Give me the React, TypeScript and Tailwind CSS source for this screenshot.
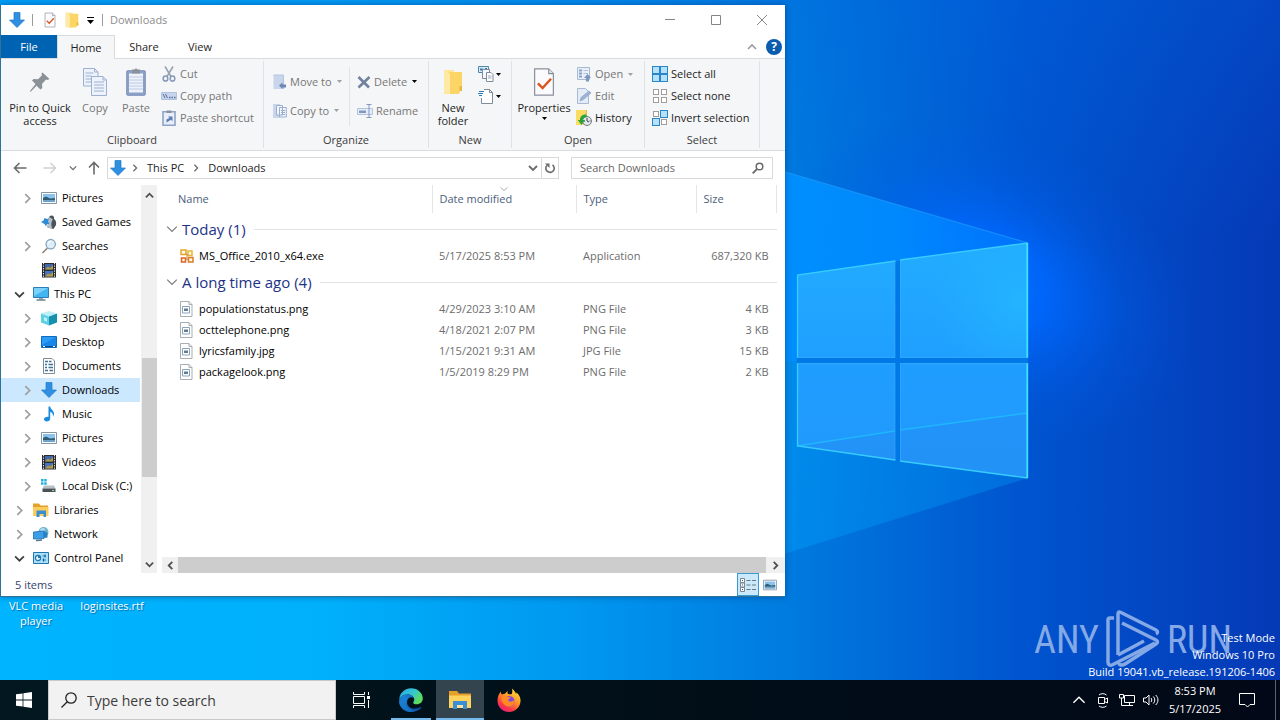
import type { ReactNode } from "react";

type IconProps = { className?: string };

/* ---------- small shared drawings ---------- */

function DownArrow({ className = "size-4" }: IconProps) {
  return (
    <svg viewBox="0 0 16 16" className={className} aria-hidden="true">
      <path d="M5 .5h6V8h4.500L8 15.500.5 8H5z" fill="#2f8fe0" />
      <path d="M5 .5h6V8h4.500L8 15.500.5 8H5z" fill="none" stroke="#1f78c8" strokeWidth=".7" />
    </svg>
  );
}

function Chevron({ dir, className = "size-2.5", w = 1.600 }: IconProps & { dir: "up" | "down" | "left" | "right"; w?: number }) {
  const d = {
    up: "M1 7l4-4 4 4",
    down: "M1 3l4 4 4-4",
    left: "M7 1L3 5l4 4",
    right: "M3 1l4 4-4 4",
  }[dir];
  return (
    <svg viewBox="0 0 10 10" className={className} aria-hidden="true">
      <path d={d} fill="none" stroke="currentColor" strokeWidth={w} />
    </svg>
  );
}

function Caret({ className = "text-black" }: IconProps) {
  return (
    <svg viewBox="0 0 5 3" className={"h-[3px] w-[5px] shrink-0 " + className} aria-hidden="true">
      <path d="M0 0h5L2.500 3z" fill="currentColor" />
    </svg>
  );
}

function CheckDoc({ className = "size-4" }: IconProps) {
  return (
    <svg viewBox="0 0 24 32" className={className} aria-hidden="true">
      <path d="M2 2h15l5 5v23H2z" fill="#fbfbfd" stroke="#8a8f9c" strokeWidth="1.300" />
      <path d="M17 2v5h5" fill="#dde3ee" stroke="#8a8f9c" strokeWidth="1.200" />
      <path d="M5.500 17.500l5 5 9-10" fill="none" stroke="#d9541e" strokeWidth="2.600" />
    </svg>
  );
}

function FolderIcon({ className = "size-4" }: IconProps) {
  return (
    <svg viewBox="0 0 20 26" preserveAspectRatio="none" className={className} aria-hidden="true">
      <path d="M1 1h10v24H1z" fill="#ffe596" />
      <path d="M6 3h13v19h-2l-1 3H6z" fill="#fbd566" />
      <path d="M1 1l6 4v20.500L1 23z" fill="#ffe9a6" />
      <path d="M16.500 17h2.500v5h-2.500z" fill="#e6b83d" />
    </svg>
  );
}

/* ---------- ribbon icons ---------- */

const PinIcon = () => (
  <svg viewBox="0 0 24 24" className="size-6" aria-hidden="true">
    <path d="M14.500 2.500l7 6.500-2 1-1.500-.5-4 4.500.3 4-1.800 1.500-4-3.700L3 21.500l-1 .3.2-1L7.500 14 4 10.500 5.500 9l4.500.3 4-4-.6-1.500z" fill="#8b9196" />
  </svg>
);

const CopyIcon = () => (
  <svg viewBox="0 0 24 28" className="h-7 w-6" aria-hidden="true">
    <g fill="#edf2fb" stroke="#9cb1d2">
      <path d="M.5.500h11l3.500 3.500v14H.5z" />
      <path d="M11.500.500V4H15" fill="none" />
      <path d="M2.500 5h8M2.500 8h6M2.500 11h6M2.500 14h6" />
      <path d="M8.500 8.500h11.500l3.500 3.500v15.500h-15z" />
      <path d="M20 8.500V12h3.500M11 14h10M11 17h10M11 20h10M11 23h10" fill="none" />
    </g>
  </svg>
);

const PasteIcon = () => (
  <svg viewBox="0 0 20 28" className="h-7 w-5" aria-hidden="true">
    <rect x=".7" y="2.700" width="18.600" height="24.600" rx="1" fill="#8ba1c8" stroke="#7e93b8" />
    <path d="M3 5.500h14v19H3z" fill="#eef3fb" />
    <path d="M3 9h14M3 12h14M3 15h14M3 18h14M3 21h14" stroke="#bccae3" />
    <path d="M6 1.500h2.500a1.600 1.600 0 013 0H14v4H6z" fill="#8b919c" />
  </svg>
);

const CutIcon = () => (
  <svg viewBox="0 0 16 16" className="size-4" aria-hidden="true">
    <path d="M4 .5l6 10M12 .5l-6 10" stroke="#9aa4b2" strokeWidth="1.600" />
    <g fill="none" stroke="#8299bb" strokeWidth="1.500">
      <ellipse cx="4.500" cy="12.500" rx="2.300" ry="2.600" />
      <ellipse cx="11.500" cy="12.500" rx="2.300" ry="2.600" />
    </g>
  </svg>
);

const CopyPathIcon = () => (
  <svg viewBox="0 0 16 16" className="size-4" aria-hidden="true">
    <path d="M.5 4.500h15v7H.5z" fill="#c6d5ec" stroke="#b0c2df" />
    <path d="M2 6l2 4M4.500 6l2 4" stroke="#59709a" />
    <path d="M8 9.500h1.500M10.500 9.500H12M13 9.500h1.500" stroke="#59709a" strokeWidth="1.300" />
  </svg>
);

const PasteShortcutIcon = () => (
  <svg viewBox="0 0 16 16" className="size-4" aria-hidden="true">
    <path d="M2 1.700h12v13.600H2z" fill="#e9eff9" stroke="#8ea3c6" strokeWidth="1.600" />
    <path d="M5.500.5h5v2.500h-5z" fill="#8b919c" />
    <path d="M5.500 12.500V9.500l3-1.500-1.500-1.500h4.500v4.700L10 9.700z" fill="#5a7db5" />
  </svg>
);

const MoveIcon = () => (
  <svg viewBox="0 0 14 16" className="h-4 w-3.500" aria-hidden="true">
    <path d="M.5 1h10v14H.5z" fill="#c9d5ea" />
    <path d="M10.500 1v14M.5 1h10" stroke="#b4c3de" />
    <path d="M6 11.500l3.500-3v2H13v3H9.500v1.500z" fill="#6d87b5" />
  </svg>
);

const CopyToIcon = () => (
  <svg viewBox="0 0 14 16" className="h-4 w-3.500" aria-hidden="true">
    <path d="M0 1h7v14H0z" fill="#c9d5ea" />
    <path d="M3.500 2.500h6V12h-6zM6.500 4.500h6.800v9.500H6.500z" fill="#f1f5fb" stroke="#9bb0d1" />
    <path d="M8 7.500h4M8 9.500h4M8 11.500h4" stroke="#9bb0d1" />
  </svg>
);

const DeleteIcon = () => (
  <svg viewBox="0 0 14 16" className="h-4 w-3.500" aria-hidden="true">
    <path d="M1.500 3l10.500 10.500M12.500 3L1.500 13.500" stroke="#71829c" strokeWidth="2.600" />
  </svg>
);

const RenameIcon = () => (
  <svg viewBox="0 0 16 16" className="size-4" aria-hidden="true">
    <path d="M.5 5.500h15v6H.5z" fill="#e6edf8" stroke="#b2c3de" />
    <path d="M2 7.500h7v2.500H2z" fill="#8098c2" />
    <path d="M12 1.500v13M9.500 1.500h5M9.500 14.500h5" stroke="#8098c2" />
  </svg>
);

const NewItemIcon = () => (
  <svg viewBox="0 0 16 16" className="size-4" aria-hidden="true">
    <path d="M.5.500h10v6H.5z" fill="#d8ebf9" stroke="#4f86ac" />
    <path d="M2 2.500h3v2H2zM7 2h2v1.500H7z" fill="#3d79a5" />
    <path d="M4.500 3.500h7v9h-7z" fill="#f7f9fc" stroke="#7f8c9a" />
    <path d="M8.500 6.500h4.500l2 2v7H8.500z" fill="#fff" stroke="#7f8c9a" />
    <path d="M10 10h3.500M10 12h3.500" stroke="#9aa6b3" />
  </svg>
);

const EasyAccessIcon = () => (
  <svg viewBox="0 0 16 16" className="size-4" aria-hidden="true">
    <path d="M3.500 1.500h8l3 3v11h-11z" fill="#fff" />
    <path d="M6 1.500h5.500l3 3v11h-11V10" fill="none" stroke="#7f8c9a" />
    <path d="M11.500 1.500v3h3" fill="none" stroke="#7f8c9a" />
    <path d="M1 3.500h5M0 5.500h5M1 7.500h3" stroke="#2f7cc0" />
  </svg>
);

const OpenIcon = () => (
  <svg viewBox="0 0 16 16" className="size-4" aria-hidden="true">
    <path d="M1.500 1.500h12v12h-12z" fill="#e8eef8" stroke="#a9b9d4" />
    <path d="M3 3.500h3v2H3zM3 6.500h3v2H3zM3 9.500h3v2H3z" fill="#8ba1c8" />
    <path d="M7.500 4.500H12M7.500 7.500H12" stroke="#b7c5dd" />
    <path d="M10 15.500V12H8l3.500-4 3.500 4h-2v3.500z" fill="#7d96bf" />
  </svg>
);

const EditIcon = () => (
  <svg viewBox="0 0 16 16" className="size-4" aria-hidden="true">
    <path d="M1.500.500h8l3 3v12h-11z" fill="#e5ecf8" stroke="#a9b9d4" />
    <path d="M4 13l1-3.500L13 3l2 2-7.500 6.500z" fill="#9db4d8" stroke="#839cc5" strokeWidth=".6" />
  </svg>
);

const HistoryIcon = () => (
  <svg viewBox="0 0 16 16" className="size-4" aria-hidden="true">
    <path d="M0 0h9.500v15H0z" fill="#fbdc62" />
    <path d="M9.500 0H11v8H9.500z" fill="#e8bd3f" />
    <circle cx="11" cy="11" r="4.500" fill="#e5e8ea" stroke="#717b82" />
    <path d="M11 8v3l2 1M8 11h1M13.500 11h1" fill="none" stroke="#3d454a" />
    <path d="M10.500 4.500C6 4 3.800 7 4 10H1.800l3.700 5 3.500-5H7c0-2 1.200-2.700 3.500-2.700z" fill="#2aa33a" />
  </svg>
);

function SelectIcon({ filled }: { filled: [boolean, boolean, boolean, boolean] }) {
  const cells = [[1, 1], [9, 1], [1, 9], [9, 9]];
  return (
    <svg viewBox="0 0 16 16" className="size-4" aria-hidden="true">
      {cells.map(([x, y], i) =>
        filled[i] ? (
          <rect key={i} x={x - 0.5} y={y - 0.5} width="7" height="7" fill="#b5e1fb" stroke="#2a86c8" />
        ) : (
          <rect key={i} x={x + 0.5} y={y + 0.5} width="5" height="5" fill="#fff" stroke="#a39c98" />
        ),
      )}
    </svg>
  );
}

/* ---------- navigation tree icons ---------- */

const PictureIcon = ({ className = "size-4" }: IconProps) => (
  <svg viewBox="0 0 16 16" className={className} aria-hidden="true">
    <path d="M.5 2.500h15v11H.5z" fill="#fff" stroke="#8796a5" />
    <path d="M2 4h12v8H2z" fill="#8cc3ec" />
    <path d="M2 8l3-1.500 4 2 5-.5V10H2z" fill="#2e5d74" />
    <path d="M2 10h12v2H2z" fill="#6ea3cb" />
  </svg>
);

const GamesIcon = () => (
  <svg viewBox="0 0 16 16" className="size-4" aria-hidden="true">
    <path d="M10.500 1.500c2 0 3 1.500 2.500 3.500 2 1 2.500 4 2 6l-2.500 4-6-1.500 1-9C8 2.500 9 1.500 10.500 1.500z" fill="#49535b" />
    <path d="M8.500 3c-2 3-2.500 8-1 11l4 .5c-2-3-1-8 .5-9z" fill="#b7c0c6" />
    <path d="M0 8l2.500-1.500L3.500 4 6 5l1.500-.5-.5 3L8.500 10 6 10l-1 2.500L3.500 10z" fill="#2e8bd6" />
  </svg>
);

const SearchesIcon = () => (
  <svg viewBox="0 0 16 16" className="size-4" aria-hidden="true">
    <path d="M6.500 10L1.500 15" stroke="#8e8478" strokeWidth="1.600" />
    <circle cx="9.700" cy="6.200" r="4.700" fill="#dceefa" stroke="#8ba5b8" strokeWidth="1.300" />
    <path d="M7 5.500C7.500 4 9 3 10.500 3.200" fill="none" stroke="#fff" strokeWidth="1.300" />
  </svg>
);

const VideosIcon = () => (
  <svg viewBox="0 0 16 16" className="size-4" aria-hidden="true">
    <path d="M1 1h14v14.500H1z" fill="#2b2b33" />
    <path d="M2.500 1v14.500M13.500 1v14.500" stroke="#e5e5e5" strokeDasharray="1.300 1.200" />
    <path d="M4 2h8v5.500H4z" fill="#3e66a8" />
    <path d="M4 9h8v5.500H4z" fill="#4674b8" />
    <path d="M4 7.500l3-3 2 1.500 3-3v4.500zM4 14.500l3-3 2 1 3-2.500v4.500z" fill="#b29a45" />
  </svg>
);

const ThisPcIcon = () => (
  <svg viewBox="0 0 16 16" className="size-4" aria-hidden="true">
    <path d="M.5 1.500h15v10H.5z" fill="#41b5f2" stroke="#2a7fb4" />
    <path d="M1 2h14L1 10z" fill="#7ad2fb" />
    <path d="M6 12h4v1.500H6z" fill="#9aa7b0" />
    <path d="M3.500 14h9" stroke="#53717f" strokeWidth="1.300" />
  </svg>
);

const ObjectsIcon = () => (
  <svg viewBox="0 0 16 16" className="size-4" aria-hidden="true">
    <path d="M0 3.500L8 1l8 2.500-8 3z" fill="#bdf0f7" />
    <path d="M0 3.500l8 3V15.500L0 12.500z" fill="#5dd0e3" />
    <path d="M8 6.500l8-3v9l-8 3z" fill="#1590ae" />
    <path d="M3 7l3 1.200v3.600L3 10.600z" fill="#bdf0f7" />
  </svg>
);

const DesktopIcon = () => (
  <svg viewBox="0 0 16 16" className="size-4" aria-hidden="true">
    <path d="M.5 2.500h15v11H.5z" fill="#1686e8" stroke="#0f6cbd" />
    <path d="M1 3h14L1 11z" fill="#2b9bf6" />
    <path d="M1 12.500h14" stroke="#0b4d8c" />
    <path d="M2 12.500h2M12 12.500h2" stroke="#fff" />
  </svg>
);

const DocumentsIcon = () => (
  <svg viewBox="0 0 16 16" className="size-4" aria-hidden="true">
    <path d="M2.500.500h8.500l2.500 2.500v12.500h-11z" fill="#fff" stroke="#7d8b96" />
    <path d="M4 3.500h3M8 3.500h2.500M4 6.500h2M7.500 6.500H12M4 9.500h2M7.500 9.500H12M4 12.500h3M8.500 12.500H12" stroke="#3f7296" strokeWidth="1.300" />
  </svg>
);

const MusicIcon = () => (
  <svg viewBox="0 0 16 16" className="size-4" aria-hidden="true">
    <path d="M7.500.500h1.700c.3 3 4 4 3.800 7.500-.1 1.300-.6 2-1 2.500.3-2.500-1-4-2.800-4.700v6.700c0 2-1.700 3-3.400 3-1.600 0-2.800-.9-2.800-2.200 0-1.600 1.800-2.800 4.500-2.500z" fill="#1b8be0" />
  </svg>
);

const DiskIcon = () => (
  <svg viewBox="0 0 16 16" className="size-4" aria-hidden="true">
    <path d="M0 1h2.500v2.500H0zM3.200 1h2.500v2.500H3.200zM0 4.200h2.500v2.500H0zM3.200 4.200h2.500v2.500H3.200z" fill="#22b0dc" />
    <path d="M3 7.500h10l1.500 3h-13z" fill="#b9c0c5" />
    <path d="M1.500 10.500h13V14h-13z" fill="#4a5156" />
    <path d="M11 12.500h2" stroke="#8fe698" />
  </svg>
);

const LibraryIcon = () => (
  <svg viewBox="0 0 16 16" className="size-4" aria-hidden="true">
    <path d="M0 1.500h6l1.500 2H15v3H0z" fill="#e3a02c" />
    <path d="M0 5h15.500v9H0z" fill="#fbce5b" />
    <path d="M3.500 8.500h9.500v6.500h-2.500v-3H6.500v3h-3z" fill="#3a8fd4" />
  </svg>
);

const NetworkIcon = () => (
  <svg viewBox="0 0 16 16" className="size-4" aria-hidden="true">
    <circle cx="10.500" cy="6" r="5" fill="#6fb2cf" />
    <path d="M7 3.500c2-2 4-2 5 0l-1.500 3.500L8 6z" fill="#b5dfee" />
    <path d="M.5 6l10.500-1v7.500L.5 13z" fill="#3a9fe8" stroke="#1c6cad" strokeWidth=".8" />
    <path d="M11 5l3.500 2v4.500l-3.500.5z" fill="#2b7fbd" />
    <path d="M3 14.500l6-.5" stroke="#4b7590" strokeWidth="1.300" />
  </svg>
);

const ControlPanelIcon = () => (
  <svg viewBox="0 0 16 16" className="size-4" aria-hidden="true">
    <path d="M.5 2.500h15v11H.5z" fill="#a8e0fa" stroke="#2476b0" />
    <circle cx="5" cy="8" r="2.600" fill="#e4f6fe" stroke="#2077b4" strokeWidth="1.200" />
    <path d="M5 8V5.400A2.600 2.600 0 017.600 8z" fill="#2077b4" />
    <path d="M9.500 6H13M9.500 10H13" stroke="#2077b4" strokeWidth="1.200" />
    <path d="M12 4.500v3M10.500 8.500v3" stroke="#17527b" />
  </svg>
);

const OfficeIcon = () => (
  <svg viewBox="0 0 16 16" className="size-4" aria-hidden="true">
    <g fill="#fff8e6" strokeWidth="1.500">
      <path d="M2 2h5v4.500H2z" stroke="#e5a52c" />
      <path d="M9 3h4v4.500H9z" stroke="#e8b63a" />
      <path d="M2.500 10h4v4h-4z" stroke="#d9632b" />
      <path d="M9.500 9.500H14V14H9.500z" stroke="#dc7b2a" />
    </g>
    <path d="M6.500 6l3 1M6.500 11l3 1M8 7v4" stroke="#e08c2d" />
  </svg>
);

const ImageFileIcon = () => (
  <svg viewBox="0 0 16 16" className="size-4" aria-hidden="true">
    <path d="M1.500.500h8.500l3 3v12H1.500z" fill="#fff" stroke="#a9aeb3" />
    <path d="M10 .5v3h3" fill="#e6e8ea" stroke="#a9aeb3" />
    <path d="M3.500 5.500h7V12h-7z" fill="#fff" stroke="#8ba3b8" />
    <path d="M5 7.500h4v2.500H5z" fill="#5d7d94" />
  </svg>
);

/* ---------- ribbon building blocks ---------- */

function RibbonGroup({ label, className, children }: { label: string; className: string; children: ReactNode }) {
  return (
    <section className={"flex flex-col border-r border-[#dfe2e5] " + className} aria-label={label}>
      <div className="flex h-[72px]">{children}</div>
      <h2 className="text-center leading-4 text-[#3c3c3c]">{label}</h2>
    </section>
  );
}

function BigButton({ icon, label, caret, dim, className }: { icon: ReactNode; label: string; caret?: boolean; dim?: boolean; className: string }) {
  return (
    <button className={"flex flex-col items-center gap-[3px] pt-[5px] leading-[13px] " + (dim ? "text-[#777] " : "text-[#1e1e1e] ") + className}>
      <span className="flex h-8 items-center justify-center">{icon}</span>
      <span>{label}</span>
      {caret && <Caret />}
    </button>
  );
}

function RowButton({ icon, label, caret, dim, tall }: { icon: ReactNode; label: string; caret?: "dark" | "dim"; dim?: boolean; tall?: boolean }) {
  return (
    <button className={"flex items-center gap-[3px] whitespace-nowrap " + (tall ? "h-[29px] " : "h-[22px] ") + (dim ? "text-[#777]" : "text-[#1e1e1e]")}>
      {icon}
      <span>{label}</span>
      {caret && <Caret className={caret === "dark" ? "ml-[2px] text-black" : "ml-[2px] text-[#a0a0a0]"} />}
    </button>
  );
}

function Ribbon() {
  return (
    <div className="flex h-[93px] border-y border-[#dadbdc] bg-[#f5f6f7] py-0.5">
      <RibbonGroup label="Clipboard" className="w-[263px]">
        <BigButton className="w-[78px]" icon={<PinIcon />} label="Pin to Quick access" />
        <BigButton className="w-8" dim icon={<CopyIcon />} label="Copy" />
        <BigButton className="w-[50px]" dim icon={<PasteIcon />} label="Paste" />
        <div className="flex flex-col pt-0.5">
          <RowButton dim icon={<CutIcon />} label="Cut" />
          <RowButton dim icon={<CopyPathIcon />} label="Copy path" />
          <RowButton dim icon={<PasteShortcutIcon />} label="Paste shortcut" />
        </div>
      </RibbonGroup>
      <RibbonGroup label="Organize" className="w-[165px]">
        <div className="my-1.5 flex w-[86px] flex-col border-r border-[#e2e4e7] pl-[9px]">
          <RowButton tall dim caret="dim" icon={<MoveIcon />} label="Move to" />
          <RowButton tall dim caret="dim" icon={<CopyToIcon />} label="Copy to" />
        </div>
        <div className="my-1.5 flex flex-col pl-[7px]">
          <RowButton tall dim caret="dark" icon={<DeleteIcon />} label="Delete" />
          <RowButton tall dim icon={<RenameIcon />} label="Rename" />
        </div>
      </RibbonGroup>
      <RibbonGroup label="New" className="w-[83px]">
        <BigButton className="w-12" icon={<FolderIcon className="h-[26px] w-5" />} label="New folder" />
        <div className="flex flex-col pl-px pt-0.5">
          <button aria-label="New item" className="flex h-[22px] items-center gap-[2px]">
            <NewItemIcon />
            <Caret />
          </button>
          <button aria-label="Easy access" className="flex h-[22px] items-center gap-[2px]">
            <EasyAccessIcon />
            <Caret />
          </button>
        </div>
      </RibbonGroup>
      <RibbonGroup label="Open" className="w-[133px]">
        <BigButton className="w-16" caret icon={<CheckDoc className="h-[30px] w-6" />} label="Properties" />
        <div className="flex flex-col pt-0.5">
          <RowButton dim caret="dim" icon={<OpenIcon />} label="Open" />
          <RowButton dim icon={<EditIcon />} label="Edit" />
          <RowButton icon={<HistoryIcon />} label="History" />
        </div>
      </RibbonGroup>
      <RibbonGroup label="Select" className="w-[115px]">
        <div className="flex flex-col pl-[7px] pt-0.5">
          <RowButton icon={<SelectIcon filled={[true, true, true, true]} />} label="Select all" />
          <RowButton icon={<SelectIcon filled={[false, false, false, false]} />} label="Select none" />
          <RowButton icon={<SelectIcon filled={[false, true, true, false]} />} label="Invert selection" />
        </div>
      </RibbonGroup>
    </div>
  );
}

/* ---------- window parts ---------- */

function TitleBar() {
  return (
    <header className="flex h-[30px] items-center">
      <div className="flex items-center pl-2">
        <DownArrow />
        <span className="ml-[7px] mr-2.5 h-3 w-px bg-[#9a9a9a]" />
        <button aria-label="Properties"><CheckDoc className="h-4 w-3.5" /></button>
        <button aria-label="New folder" className="ml-2"><FolderIcon className="h-4 w-3.5" /></button>
        <button aria-label="Customize Quick Access Toolbar" className="ml-2 flex flex-col items-center gap-0.5">
          <span className="h-px w-[7px] bg-black" />
          <svg viewBox="0 0 7 4" className="h-1 w-[7px]" aria-hidden="true"><path d="M0 0h7L3.500 4z" /></svg>
        </button>
        <span className="ml-2 h-3 w-px bg-[#9a9a9a]" />
      </div>
      <h1 className="pl-[7px] text-[#8c8c8c]">Downloads</h1>
      <div className="ml-auto flex text-[#858585]">
        <button aria-label="Minimize" className="flex h-7 w-[46px] items-center justify-center">
          <svg viewBox="0 0 10 10" className="size-2.5"><path d="M0 4.500h10" stroke="currentColor" /></svg>
        </button>
        <button aria-label="Maximize" className="flex h-7 w-[46px] items-center justify-center">
          <svg viewBox="0 0 10 10" className="size-2.5"><path d="M.5.500h9v9h-9z" fill="none" stroke="currentColor" /></svg>
        </button>
        <button aria-label="Close" className="flex h-7 w-[46px] items-center justify-center">
          <svg viewBox="0 0 10 10" className="size-2.5"><path d="M0 0l10 10M10 0L0 10" stroke="currentColor" /></svg>
        </button>
      </div>
    </header>
  );
}

function Tabs() {
  return (
    <nav className="-mb-px flex h-6 items-stretch text-[#1e1e1e]" aria-label="Ribbon tabs">
      <button className="mb-px w-14 bg-[#0063b1] text-white">File</button>
      <button className="relative w-[58px] border border-b-0 border-[#dadbdc] bg-[#f5f6f7]">Home</button>
      <button className="w-[58px]">Share</button>
      <button className="w-[54px]">View</button>
      <div className="ml-auto flex items-center gap-[9px] pr-[3px] text-[#9a9a9a]">
        <button aria-label="Collapse ribbon"><Chevron dir="up" className="size-2.5" /></button>
        <button aria-label="Help" className="flex size-4 items-center justify-center rounded-full bg-[#0a5cae] text-xs font-bold leading-none text-white">?</button>
      </div>
    </nav>
  );
}

function AddressRow() {
  return (
    <div className="flex h-[34px] items-center pr-3 text-[#1e1e1e]">
      <div className="flex w-[106px] items-center pl-3 text-[#6a6a6a]">
        <button aria-label="Back">
          <svg viewBox="0 0 14 12" className="h-3 w-3.5"><path d="M13.500 6H2M6.500 1l-5 5 5 5" fill="none" stroke="currentColor" strokeWidth="1.600" /></svg>
        </button>
        <button aria-label="Forward" className="ml-4 text-[#cfcfcf]">
          <svg viewBox="0 0 14 12" className="h-3 w-3.5"><path d="M.5 6H12M7.500 1l5 5-5 5" fill="none" stroke="currentColor" strokeWidth="1.400" /></svg>
        </button>
        <button aria-label="Recent locations" className="ml-3"><Chevron dir="down" className="size-2" w={1.6} /></button>
        <button aria-label="Up" className="ml-[11px]">
          <svg viewBox="0 0 12 14" className="h-3.500 w-3"><path d="M6 13.500V2M1 6.500l5-5 5 5" fill="none" stroke="currentColor" strokeWidth="1.600" /></svg>
        </button>
      </div>
      <div className="flex h-[22px] flex-1 items-center border border-[#d9d9d9]">
        <span className="pl-0.5"><DownArrow /></span>
        <Chevron dir="right" className="ml-[5px] size-2 text-[#6a6a6a]" />
        <button className="ml-2">This PC</button>
        <Chevron dir="right" className="ml-2 size-2 text-[#6a6a6a]" />
        <button className="ml-2">Downloads</button>
        <button aria-label="Previous locations" className="ml-auto mr-[3px] text-[#6a6a6a]"><Chevron dir="down" w={1.8} /></button>
        <button aria-label="Refresh" className="flex h-full w-[17px] items-center justify-center border-l border-[#d9d9d9] text-[#6a6a6a]">
          <svg viewBox="0 0 12 12" className="size-3">
            <path d="M8.500 2.800A4.200 4.200 0 112.800 3.500" fill="none" stroke="currentColor" strokeWidth="1.600" />
            <path d="M1 1.500h4.500V6z" fill="currentColor" />
          </svg>
        </button>
      </div>
      <div className="ml-3 flex h-[22px] w-[202px] items-center border border-[#d9d9d9] pl-2 pr-2">
        <input aria-label="Search Downloads" placeholder="Search Downloads" className="min-w-0 flex-1 bg-transparent outline-none placeholder:text-[#666]" />
        <svg viewBox="0 0 12 12" className="size-3 text-[#6a6a6a]" aria-hidden="true">
          <circle cx="7.500" cy="4.500" r="3.300" fill="none" stroke="currentColor" strokeWidth="1.500" />
          <path d="M5.200 6.800L.7 11.300" stroke="currentColor" strokeWidth="1.900" />
        </svg>
      </div>
    </div>
  );
}

type TreeItem = { label: string; icon: ReactNode; level: 0 | 1; state?: "open" | "closed"; selected?: boolean };

const tree: TreeItem[] = [
  { label: "Pictures", icon: <PictureIcon />, level: 1, state: "closed" },
  { label: "Saved Games", icon: <GamesIcon />, level: 1 },
  { label: "Searches", icon: <SearchesIcon />, level: 1, state: "closed" },
  { label: "Videos", icon: <VideosIcon />, level: 1 },
  { label: "This PC", icon: <ThisPcIcon />, level: 0, state: "open" },
  { label: "3D Objects", icon: <ObjectsIcon />, level: 1, state: "closed" },
  { label: "Desktop", icon: <DesktopIcon />, level: 1, state: "closed" },
  { label: "Documents", icon: <DocumentsIcon />, level: 1, state: "closed" },
  { label: "Downloads", icon: <DownArrow />, level: 1, state: "closed", selected: true },
  { label: "Music", icon: <MusicIcon />, level: 1, state: "closed" },
  { label: "Pictures", icon: <PictureIcon />, level: 1, state: "closed" },
  { label: "Videos", icon: <VideosIcon />, level: 1, state: "closed" },
  { label: "Local Disk (C:)", icon: <DiskIcon />, level: 1, state: "closed" },
  { label: "Libraries", icon: <LibraryIcon />, level: 0, state: "closed" },
  { label: "Network", icon: <NetworkIcon />, level: 0, state: "closed" },
  { label: "Control Panel", icon: <ControlPanelIcon />, level: 0, state: "open" },
];

function NavTree() {
  return (
    <nav className="flex" aria-label="Navigation pane">
      <ul className="w-[139px] pt-px">
        {tree.map((item, i) => (
          <li key={i}>
            <button
              className={
                "flex h-6 w-full items-center gap-[5px] whitespace-nowrap text-black " +
                (item.level ? "pl-[21px] " : "pl-[13px] ") +
                (item.selected ? "bg-[#cce8ff]" : "")
              }
            >
              <span className="flex w-3.5 justify-start">
                {item.state === "closed" && <Chevron dir="right" className="size-[11px] text-[#a0a0a0]" />}
                {item.state === "open" && <Chevron dir="down" className="size-[11px] text-[#404040]" />}
              </span>
              {item.icon}
              <span>{item.label}</span>
            </button>
          </li>
        ))}
      </ul>
      <div className="ml-px flex w-4 flex-col items-center bg-[#f0f0f0] text-[#505050]">
        <button aria-label="Scroll up" className="flex h-5 items-center"><Chevron dir="up" className="size-[9px]" w={2} /></button>
        <div className="mt-[153px] h-[119px] w-[15px] bg-[#cdcdcd]" />
        <button aria-label="Scroll down" className="mt-auto flex h-[17px] items-center"><Chevron dir="down" className="size-[9px]" w={2} /></button>
      </div>
    </nav>
  );
}

type FileRow = { name: string; date: string; type: string; size: string; icon: ReactNode };

const groups: { title: string; files: FileRow[] }[] = [
  {
    title: "Today (1)",
    files: [{ name: "MS_Office_2010_x64.exe", date: "5/17/2025 8:53 PM", type: "Application", size: "687,320 KB", icon: <OfficeIcon /> }],
  },
  {
    title: "A long time ago (4)",
    files: [
      { name: "populationstatus.png", date: "4/29/2023 3:10 AM", type: "PNG File", size: "4 KB", icon: <ImageFileIcon /> },
      { name: "octtelephone.png", date: "4/18/2021 2:07 PM", type: "PNG File", size: "3 KB", icon: <ImageFileIcon /> },
      { name: "lyricsfamily.jpg", date: "1/15/2021 9:31 AM", type: "JPG File", size: "15 KB", icon: <ImageFileIcon /> },
      { name: "packagelook.png", date: "1/5/2019 8:29 PM", type: "PNG File", size: "2 KB", icon: <ImageFileIcon /> },
    ],
  },
];

function FileList() {
  return (
    <main className="flex min-w-0 flex-1 flex-col pl-[5px]">
      <div className="flex-1 pr-2">
        <table className="w-full table-fixed border-collapse text-left">
          <colgroup>
            <col className="w-[270px]" />
            <col className="w-36" />
            <col className="w-[120px]" />
            <col />
          </colgroup>
          <thead className="text-[#4c607a]">
            <tr className="h-7">
              <th className="border-r border-[#e5e5e5] pl-4 font-normal">Name</th>
              <th className="relative border-r border-[#e5e5e5] pl-[7px] font-normal">
                Date modified
                <span className="absolute inset-x-0 top-0 flex justify-center text-[#a0a0a0]"><Chevron dir="down" className="size-2" w={1.200} /></span>
              </th>
              <th className="border-r border-[#e5e5e5] pl-[7px] font-normal">Type</th>
              <th className="border-r border-[#e5e5e5] pl-[7px] font-normal">Size</th>
            </tr>
          </thead>
          {groups.map((group) => (
            <tbody key={group.title}>
              <tr className="h-8">
                <th colSpan={4} className="p-0 font-normal">
                  <button className="flex w-full items-center gap-1 pl-1 text-[15px] leading-5 text-[#1e3287]">
                    <Chevron dir="down" className="size-3 text-[#7a7a7a]" w={1} />
                    <span>{group.title}</span>
                    <span className="ml-1 h-px flex-1 bg-[#e2e2e2]" />
                  </button>
                </th>
              </tr>
              {group.files.map((file) => (
                <tr key={file.name} className="h-[21px] text-[#6d6d6d]">
                  <td className="p-0 pl-[17px] text-black">
                    <span className="flex items-center gap-1">{file.icon}{file.name}</span>
                  </td>
                  <td className="p-0 pl-[7px]">{file.date}</td>
                  <td className="p-0 pl-[7px]">{file.type}</td>
                  <td className="p-0 pr-2 text-right">{file.size}</td>
                </tr>
              ))}
            </tbody>
          ))}
        </table>
      </div>
      <div className="flex h-4 bg-[#f0f0f0] text-[#505050]">
        <button aria-label="Scroll left" className="flex w-4 items-center justify-center"><Chevron dir="left" className="size-[9px]" w={2} /></button>
        <div className="flex-1 bg-[#cdcdcd]" />
        <button aria-label="Scroll right" className="flex w-[19px] items-center justify-center"><Chevron dir="right" className="size-[9px]" w={2} /></button>
      </div>
    </main>
  );
}

function StatusBar() {
  return (
    <footer className="flex h-[23px] items-center pl-3.5 text-[#33436b]">
      <span>5 items</span>
      <div className="ml-auto flex items-center pr-2">
        <button aria-label="Details view" className="flex h-[23px] w-[22px] items-center justify-center border border-[#3a9bd0] bg-[#cbe9fb]">
          <svg viewBox="0 0 16 14" className="h-3.5 w-4">
            <path d="M.5.500h4v4h-4zM.5 5h4v4h-4zM.5 9.500h4v4h-4z" fill="#fff" stroke="#7a8790" />
            <path d="M2 2.500h1M2 7h1M2 11.500h1" stroke="#2b5f84" />
            <path d="M6.500 2.500h4M12 2.500h4M6.500 7h4M12 7h4M6.500 11.500h4M12 11.500h4" stroke="#6b7880" />
          </svg>
        </button>
        <button aria-label="Large icons view" className="ml-1"><PictureIcon className="size-3.5" /></button>
      </div>
    </footer>
  );
}

function ExplorerWindow() {
  return (
    <section
      aria-label="File Explorer"
      className="absolute left-0 top-[5px] flex h-[592px] w-[785px] flex-col border-b border-l border-[#2b7399] bg-white shadow-[0_0_6px_rgba(0,30,90,0.450)]"
    >
      <TitleBar />
      <Tabs />
      <Ribbon />
      <AddressRow />
      <div className="flex min-h-0 flex-1">
        <NavTree />
        <FileList />
      </div>
      <StatusBar />
    </section>
  );
}

/* ---------- desktop ---------- */

function Wallpaper() {
  return (
    <svg viewBox="0 0 1280 680" preserveAspectRatio="xMidYMin slice" className="absolute inset-0 size-full" aria-hidden="true">
      <defs>
        <linearGradient id="base" x1="0" y1="0" x2="1280" y2="0" gradientUnits="userSpaceOnUse">
          <stop offset="0" stopColor="#00b4ff" />
          <stop offset=".25" stopColor="#00b0fb" />
          <stop offset=".45" stopColor="#0098f0" />
          <stop offset=".62" stopColor="#007ade" />
          <stop offset=".8" stopColor="#0054cf" />
          <stop offset="1" stopColor="#0539b6" />
        </linearGradient>
        <linearGradient id="top" x1="0" y1="0" x2="0" y2="240" gradientUnits="userSpaceOnUse">
          <stop offset="0" stopColor="#0066e0" stopOpacity=".3" />
          <stop offset="1" stopColor="#0066e0" stopOpacity="0" />
        </linearGradient>
        <radialGradient id="glow" cx="0" cy="0" r="1" gradientUnits="userSpaceOnUse" gradientTransform="translate(985 280) rotate(25) scale(220 150)">
          <stop offset="0" stopColor="#0070ff" />
          <stop offset=".3" stopColor="#0068ff" stopOpacity=".85" />
          <stop offset=".65" stopColor="#0060f0" stopOpacity=".3" />
          <stop offset="1" stopColor="#0058e0" stopOpacity="0" />
        </radialGradient>
        <linearGradient id="beam" x1="700" y1="0" x2="1028" y2="0" gradientUnits="userSpaceOnUse">
          <stop offset="0" stopColor="#0092ff" />
          <stop offset=".6" stopColor="#008cff" stopOpacity=".9" />
          <stop offset="1" stopColor="#0078ff" stopOpacity=".7" />
        </linearGradient>
        <linearGradient id="lower" x1="700" y1="460" x2="1028" y2="480" gradientUnits="userSpaceOnUse">
          <stop offset="0" stopColor="#0096f0" />
          <stop offset="1" stopColor="#006cdc" />
        </linearGradient>
        <linearGradient id="pane" x1="0" y1="245" x2="0" y2="480" gradientUnits="userSpaceOnUse">
          <stop offset="0" stopColor="#22acff" />
          <stop offset=".55" stopColor="#1f9dff" />
          <stop offset="1" stopColor="#2298fb" />
        </linearGradient>
        <radialGradient id="shine" cx="1020" cy="302" r="90" gradientUnits="userSpaceOnUse">
          <stop offset="0" stopColor="#24baff" stopOpacity=".7" />
          <stop offset="1" stopColor="#24b4ff" stopOpacity="0" />
        </radialGradient>
      </defs>
      <path d="M0 0h1280v680H0z" fill="url(#base)" />
      <path d="M0 0h1280v240H0z" fill="url(#top)" />
      <path d="M740 40h540v540H740z" fill="url(#glow)" />
      <path d="M700 147l328 96v118H700z" fill="url(#beam)" />
      <path d="M700 361h328v117L700 580z" fill="url(#lower)" />
      <path d="M700 147l328 96" stroke="#1fa0ff" strokeOpacity=".6" strokeWidth="1.300" />
      <path d="M895 261h5v200h-5zM797 358h231v5H797z" fill="#0078e6" />
      <path d="M797 275l98-14v97h-98zM900 260l128-17v115H900zM797 363h98v97l-98-14zM900 363h128v115L900 461z" fill="url(#pane)" />
      <path d="M900 260l128-17v115H900z" fill="url(#shine)" />
      <path d="M797 446l98-15v29zM900 430l128-17v65l-128-17z" fill="#2390f6" fillOpacity=".75" />
      <path d="M797 446l98-15M900 430l128-17" stroke="#1fb6ff" strokeWidth="1.500" />
      <path d="M797.500 358v-83l98-14M900 260l127.500-17M797.500 363v83l98 14M900 461l127.500 17" fill="none" stroke="#38ccff" strokeWidth="1.300" />
      <path d="M1027.300 243v115M1027.300 363v115" stroke="#3de4ff" strokeWidth="1.800" />
      <path d="M797 357.500h98V261M900.500 260v97.500H1028M797 363.500h98V460M900.500 461v-97.500H1028" fill="none" stroke="#38aeff" strokeOpacity=".6" />
    </svg>
  );
}

function Watermark() {
  return (
    <div aria-label="ANY RUN" className="absolute bottom-[10px] right-[48px] flex items-center gap-1.5 font-['Roboto_Condensed','Roboto',sans-serif] text-[38px] leading-none text-[#84a9e6]">
      <span>ANY</span>
      <svg viewBox="0 0 56 60" className="h-[60px] w-14" aria-hidden="true">
        <g fill="none" stroke="#84a9e6" strokeWidth="3.500" strokeLinejoin="round">
          <path d="M9 8H5a2 2 0 00-2 2v42c0 3 2 4 5 2.500L50 33" />
          <path d="M13 45V4c0-2 1-2.500 3-1.500L51 20c2 1 2 3 0 4" />
          <path d="M17 13l34 17c2 1 2 3 0 4L20 54c-3 2-6 1-6-1" />
          <path d="M13 45l26-14" />
        </g>
      </svg>
      <span>RUN</span>
    </div>
  );
}

function Desktop() {
  return (
    <>
      <div className="absolute left-0 top-[598px] flex text-center leading-[15px] text-white [text-shadow:1px_1px_1px_rgba(0,60,120,0.600)]">
        <span className="w-[72px]">VLC media player</span>
        <span className="w-20">loginsites.rtf</span>
      </div>
      <Watermark />
      <div className="absolute bottom-0 right-[5px] text-right leading-[17px] text-white">
        <p>Test Mode</p>
        <p>Windows 10 Pro</p>
        <p>Build 19041.vb_release.191206-1406</p>
      </div>
    </>
  );
}

/* ---------- taskbar ---------- */

const EdgeIcon = () => (
  <svg viewBox="0 0 24 24" className="size-6" aria-hidden="true">
    <defs>
      <linearGradient id="edgeTop" x1="0" y1="0" x2="1" y2=".5">
        <stop offset="0" stopColor="#27a9e6" />
        <stop offset=".6" stopColor="#35c6cf" />
        <stop offset="1" stopColor="#5fdc58" />
      </linearGradient>
      <linearGradient id="edgeLow" x1="0" y1="0" x2="1" y2="1">
        <stop offset="0" stopColor="#1b86d8" />
        <stop offset="1" stopColor="#0c4fa6" />
      </linearGradient>
    </defs>
    <path d="M.2 11C1 4.500 6 .2 12 .2c7 0 11.800 5 11.800 10 0 3.800-2.700 6-6 6-2.500 0-4-1-3.600-1.800.3-.6 1-1.200 1-2.900C15.200 9 12.500 6.500 8.800 6.500 4.500 6.500 1.500 8.500.2 11z" fill="url(#edgeTop)" />
    <path d="M.1 12.500C.5 8.800 4 6.500 8.800 6.500c3 0 5 1.500 6 3.500-1-.8-2-1-3-.8-2 .3-3.800 2.300-3.800 5 0 4 3.500 6.500 7.500 6.500 2.500 0 4.500-.8 6-1.700.5-.3 1 .2.700.7C20 22.300 16.200 24 12 24 5 24-.5 18.500.1 12.500z" fill="url(#edgeLow)" />
    <path d="M8.800 6.500C4.500 6.500.5 8.500.1 12.500c3-4 7-4 9-2.500-3 2.500-3 8 .5 10.500 2 1.500 4 2.500 6.500 2.800-8 2-14.500-2-15.900-9" fill="#1f8fdc" fillOpacity=".35" />
  </svg>
);

const ExplorerIcon = () => (
  <svg viewBox="0 0 24 20" className="h-5 w-6" aria-hidden="true">
    <path d="M1 1h8l2 2.500h12V8H1z" fill="#e5a02a" />
    <path d="M1 5.500h22V18H1z" fill="#fdd35e" />
    <path d="M5 11h14v8h-4v-4H9v4H5z" fill="#3a8fd6" />
    <path d="M9 15h6v3H9z" fill="#fbe59b" />
  </svg>
);

const FirefoxIcon = () => (
  <svg viewBox="0 0 24 24" className="size-6" aria-hidden="true">
    <defs>
      <linearGradient id="fox" x1=".8" y1="0" x2=".2" y2="1">
        <stop offset="0" stopColor="#ffe83c" />
        <stop offset=".4" stopColor="#ff9828" />
        <stop offset=".75" stopColor="#fb3a45" />
        <stop offset="1" stopColor="#e5168a" />
      </linearGradient>
    </defs>
    <path d="M15 .5c3 2.500 3.500 4 4 5.500l.5-1.500C22.500 7 23.800 10 23.500 13.500 23 19.500 18 24 12 24S.6 19.500.5 13C.4 9 2 5.500 4 3.500c0 1.500.3 2.500 1 3 .7-.7 2-.9 3-.8C8.500 4.500 10 3.500 11 3.200c-1 1.500-.5 2.300.3 2.800 1.500.3 3 .3 3.200.3C15.500 4.500 15.500 2.500 15 .5z" fill="url(#fox)" />
    <circle cx="12.300" cy="13.200" r="5.200" fill="#7a4be8" />
    <path d="M4.500 9c2-1.500 4.500-1 6.500 0 1.500 0 2.500.2 2.500.8-.2 1-2 1.200-2.500 2.200 1 2.500 5 2 6.500-.5.5 4-2 7-5.500 7-4.500 0-8-4-7.500-9.500z" fill="#ff8a24" />
  </svg>
);

function TaskButton({ label, active, running, children }: { label: string; active?: boolean; running?: boolean; children: ReactNode }) {
  return (
    <button aria-label={label} className={"relative flex h-full w-12 items-center justify-center " + (active ? "bg-[#33444f]" : "")}>
      {children}
      {running && <span className={"absolute bottom-0 h-0.5 bg-[#76b9ed] " + (active ? "inset-x-0" : "inset-x-1")} />}
    </button>
  );
}

function Taskbar() {
  return (
    <footer className="relative flex h-10 w-full items-center bg-[linear-gradient(90deg,#02171f,#010f18_50%,#020817)] text-white">
      <button aria-label="Start" className="flex h-full w-12 items-center justify-center">
        <svg viewBox="0 0 16 16" className="size-4"><path d="M0 2.300L6.600 1.400v6.200H0zM7.400 1.300L16 0v7.600H7.400zM0 8.400h6.600v6.200L0 13.700zM7.400 8.400H16V16l-8.600-1.300z" fill="#fff" /></svg>
      </button>
      <label className="flex h-full w-72 items-center gap-2.5 border border-[#c9c9c9] bg-[#f2f2f2] px-3 text-[#222]">
        <svg viewBox="0 0 16 16" className="size-4 shrink-0" aria-hidden="true">
          <circle cx="10" cy="6" r="5.200" fill="none" stroke="currentColor" strokeWidth="1.300" />
          <path d="M6.300 9.700L.5 15.500" stroke="currentColor" strokeWidth="1.300" />
        </svg>
        <input aria-label="Type here to search" placeholder="Type here to search" className="min-w-0 flex-1 bg-transparent pt-0.5 text-sm outline-none placeholder:text-[#3c3c3c]" />
      </label>
      <div className="flex h-full gap-px pl-0.5">
        <TaskButton label="Task View">
          <svg viewBox="0 0 18 16" className="h-4 w-[18px]">
            <path d="M.5 0v2.500h11V0M.5 16v-2.500h11V16M.5 4.500h11v7H.5zM15.500 0v3M15.500 8v8" fill="none" stroke="#fff" />
            <path d="M14 4h3v3h-3z" fill="#fff" />
          </svg>
        </TaskButton>
        <TaskButton label="Microsoft Edge" running><EdgeIcon /></TaskButton>
        <TaskButton label="File Explorer" running active><ExplorerIcon /></TaskButton>
        <TaskButton label="Firefox"><FirefoxIcon /></TaskButton>
      </div>
      <div className="ml-auto flex h-full items-center">
        <button aria-label="Show hidden icons" className="flex w-6 justify-center"><Chevron dir="up" className="size-3.5" w={1} /></button>
        <button aria-label="Meet Now" className="flex w-6 justify-center">
          <svg viewBox="0 0 16 16" className="size-4" fill="none" stroke="currentColor">
            <path d="M3.500 5.500h6v6h-6zM9.500 7.500l3-1.500v5l-3-1.500M4 3c2-1.800 5.500-1.800 7.500 0M4 14c2 1.800 5.500 1.800 7.500 0" />
          </svg>
        </button>
        <button aria-label="Network" className="flex w-6 justify-center">
          <svg viewBox="0 0 16 16" className="size-4" fill="none" stroke="currentColor">
            <path d="M5.500 3.500h10v7h-10zM10.500 10.500v3M7 13.500h7M.5 2.500h4v3.500h-4zM2.500 6v7.500H7" />
          </svg>
        </button>
        <button aria-label="Volume" className="flex w-6 justify-center">
          <svg viewBox="0 0 16 16" className="size-4" fill="none" stroke="currentColor">
            <path d="M.5 6h2.500l3-3v10l-3-3H.5zM8 6c1 1.200 1 2.800 0 4M10.300 4.500c2 2 2 5 0 7M12.700 3c3 3 3 7 0 10" />
          </svg>
        </button>
        <button className="w-16 text-center leading-[18px]">
          <span className="block">8:53 PM</span>
          <span className="block">5/17/2025</span>
        </button>
        <button aria-label="Notifications" className="flex w-10 justify-center">
          <svg viewBox="0 0 16 16" className="size-4"><path d="M.5 1.500h15v11H11l-2.500 2.500L6 12.500H.5z" fill="none" stroke="currentColor" /></svg>
        </button>
        <button aria-label="Show desktop" className="ml-2 h-full w-[5px] border-l border-[#5a6270]" />
      </div>
    </footer>
  );
}

export default function App() {
  return (
    <div className="flex min-h-screen flex-col overflow-hidden bg-[#0078d7] font-['Open_Sans','Noto_Sans',sans-serif] text-[11px] leading-4">
      <div className="relative flex-1 overflow-hidden">
        <Wallpaper />
        <Desktop />
        <ExplorerWindow />
      </div>
      <Taskbar />
    </div>
  );
}
